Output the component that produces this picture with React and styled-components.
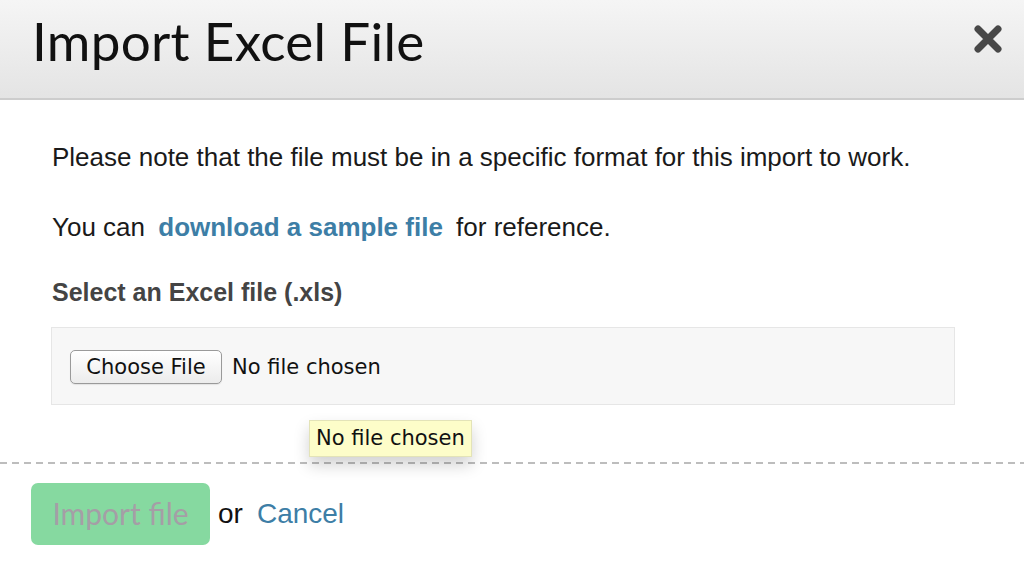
import React from 'react';
import styled, { createGlobalStyle } from 'styled-components';

const GlobalStyle = createGlobalStyle`
  html, body {
    margin: 0;
    padding: 0;
    background: #fff;
  }
`;

const Modal = styled.div`
  position: relative;
  width: 1024px;
  height: 569px;
  overflow: hidden;
  background: #fff;
  font-family: "Liberation Sans", Arial, sans-serif;
`;

const Header = styled.div`
  display: flex;
  align-items: center;
  justify-content: space-between;
  height: 100px;
  padding: 0 21px 0 32px;
  background: linear-gradient(to bottom, #f5f5f5, #e4e4e4);
  border-bottom: 2px solid #cdcdcd;
  box-sizing: border-box;
`;

const Title = styled.h1`
  margin: 0 0 18px 0;
  font-family: Lato, "Open Sans", sans-serif;
  font-weight: 400;
  font-size: 53px;
  letter-spacing: 0.3px;
  color: #111;
`;

const CloseButton = styled.button`
  display: flex;
  padding: 0;
  border: 0;
  background: none;
  margin-bottom: 21px;
  cursor: pointer;
`;

const Body = styled.div`
  padding: 41px 52px 0 52px;
`;

const Paragraph = styled.p`
  margin: 0 0 ${({ gap }) => gap || 0}px 0;
  font-size: 26px;
  line-height: 32px;
  color: #1a1a1a;
`;

const Link = styled.a`
  color: #3d7ea6;
  font-weight: bold;
  text-decoration: none;
  margin: 0 6px;
`;

const Label = styled.div`
  font-size: 25px;
  line-height: 32px;
  font-weight: bold;
  color: #444;
  margin-bottom: 19px;
`;

const FileBox = styled.div`
  display: flex;
  align-items: center;
  gap: 10px;
  height: 78px;
  width: 904px;
  box-sizing: border-box;
  margin-left: -1px;
  padding: 1px 18px 0 18px;
  background: #f7f7f7;
  border: 1px solid #e6e6e6;
`;

const ChooseButton = styled.button`
  height: 34px;
  width: 152px;
  padding: 0;
  border: 1px solid #9a9a9a;
  border-radius: 5px;
  background: linear-gradient(to bottom, #ffffff, #ececec);
  box-shadow: 0 1px 1px rgba(0, 0, 0, 0.08);
  font-family: "DejaVu Sans", sans-serif;
  font-size: 21px;
  color: #111;
`;

const FileStatus = styled.span`
  font-family: "DejaVu Sans", sans-serif;
  font-size: 21px;
  color: #111;
`;

const Tooltip = styled.div`
  position: absolute;
  left: 309px;
  top: 420px;
  padding: 5px 6px 6px 6px;
  background: #fdfdc9;
  border: 1px solid #e3e3b8;
  box-shadow: 0 8px 16px rgba(0, 0, 0, 0.18);
  font-family: "DejaVu Sans", sans-serif;
  font-size: 21px;
  line-height: 24px;
  color: #111;
  z-index: 2;
`;

const Footer = styled.div`
  margin-top: 57px;
  padding: 21px 31px;
  display: flex;
  align-items: center;
  gap: 8px;
  background-image: repeating-linear-gradient(to right, #bdbdbd 0 7px, transparent 7px 12px);
  background-size: 100% 2px;
  background-repeat: no-repeat;
  background-position: 0 0;
`;

const PrimaryButton = styled.button`
  width: 179px;
  height: 62px;
  border: 0;
  border-radius: 7px;
  background: #86d9a0;
  color: #a59ea6;
  font-family: Lato, "Open Sans", sans-serif;
  font-size: 30px;
  padding: 0 0 2px 0;
`;

const Or = styled.span`
  font-size: 28px;
  color: #111;
`;

const CancelLink = styled.a`
  font-size: 28px;
  color: #3d7ea6;
  text-decoration: none;
  margin-left: 6px;
`;

const CloseIcon = () => (
  <svg width="30" height="30" viewBox="0 0 30 30">
    <path
      d="M5 5 L25 25 M25 5 L5 25"
      stroke="#484848"
      strokeWidth="7"
      strokeLinecap="round"
    />
  </svg>
);

export default function App() {
  return (
    <>
      <GlobalStyle />
      <Modal>
        <Header>
          <Title>Import Excel File</Title>
          <CloseButton aria-label="Close">
            <CloseIcon />
          </CloseButton>
        </Header>
        <Body>
          <Paragraph gap={38}>
            Please note that the file must be in a specific format for this import to work.
          </Paragraph>
          <Paragraph gap={33}>
            You can <Link href="#">download a sample file</Link> for reference.
          </Paragraph>
          <Label>Select an Excel file (.xls)</Label>
          <FileBox>
            <ChooseButton>Choose File</ChooseButton>
            <FileStatus>No file chosen</FileStatus>
          </FileBox>
        </Body>
        <Tooltip>No file chosen</Tooltip>
        <Footer>
          <PrimaryButton disabled>Import file</PrimaryButton>
          <Or>or</Or>
          <CancelLink href="#">Cancel</CancelLink>
        </Footer>
      </Modal>
    </>
  );
}
